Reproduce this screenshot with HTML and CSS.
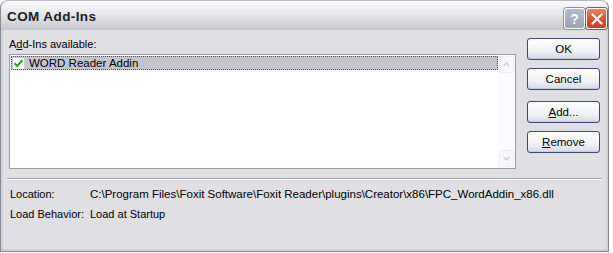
FILE: index.html
```html
<!DOCTYPE html>
<html>

<head>
    <title>COM Add-Ins</title>
    <link rel="stylesheet" href="styles.css">
</head>

<body>
    <div class="window">
        <div class="titlebar">
            <span class="title">COM Add-Ins</span>
            <div class="caption-buttons">
                <span class="cap-btn help">?</span>
                <span class="cap-btn close">
                    <svg width="12" height="12" viewBox="0 0 12 12">
                        <path d="M1.5 1.5 L10.5 10.5 M10.5 1.5 L1.5 10.5" stroke="#fff" stroke-width="2.2" stroke-linecap="round" />
                    </svg>
                </span>
            </div>
        </div>

        <div class="content">
            <div class="main-row">
                <div class="list-col">
                    <div class="list-label">A<u>d</u>d-Ins available:</div>
                    <div class="listbox">
                        <div class="items">
                            <div class="item selected">
                                <span class="check">
                                    <svg width="11" height="11" viewBox="0 0 11 11">
                                        <path d="M1.5 5.2 L4.2 8 L9.5 2.3" fill="none" stroke="#21a121" stroke-width="2" />
                                    </svg>
                                </span>
                                <span>WORD Reader Addin</span>
                            </div>
                        </div>
                        <div class="scrollbar">
                            <span class="arrow">
                                <svg width="7" height="5" viewBox="0 0 7 5"><path d="M0.5 4 L3.5 1 L6.5 4" fill="none" stroke="#c6cddd" stroke-width="1.4" /></svg>
                            </span>
                            <span class="arrow">
                                <svg width="7" height="5" viewBox="0 0 7 5"><path d="M0.5 1 L3.5 4 L6.5 1" fill="none" stroke="#c6cddd" stroke-width="1.4" /></svg>
                            </span>
                        </div>
                    </div>
                </div>

                <div class="button-col">
                    <button class="btn">OK</button>
                    <button class="btn">Cancel</button>
                    <button class="btn gap"><u>A</u>dd...</button>
                    <button class="btn"><u>R</u>emove</button>
                </div>
            </div>

            <div class="separator"></div>

            <div class="info">
                <div class="info-row">
                    <span class="info-key">Location:</span>
                    <span class="path">C:\Program Files\Foxit Software\Foxit Reader\plugins\Creator\x86\FPC_WordAddin_x86.dll</span>
                </div>
                <div class="info-row">
                    <span class="info-key">Load Behavior:</span>
                    <span>Load at Startup</span>
                </div>
            </div>
        </div>
    </div>
</body>

</html>
```

FILE: styles.css
```css
body {
    margin: 0;
    background: #ffffff;
    font-family: 'Liberation Sans', Arial, sans-serif;
    font-size: 11px;
    color: #000000;
}

.window {
    width: 609px;
    height: 252px;
    box-sizing: border-box;
    border: 1px solid #8a8a94;
    border-top-color: #b8b8c0;
    border-radius: 8px 8px 0 0;
    background: #e0dfe3;
    display: flex;
    flex-direction: column;
    overflow: hidden;
}

.titlebar {
    height: 29px;
    flex-shrink: 0;
    display: flex;
    align-items: center;
    justify-content: space-between;
    padding: 0 1px 0 6px;
    background: linear-gradient(#fbfbfc, #e6e6ea 45%, #cfcfd6 85%, #c4c4cc);
    border-radius: 7px 7px 0 0;
}

.title {
    font-weight: bold;
    font-size: 13.5px;
    color: #202024;
    letter-spacing: 0.4px;
    padding-top: 1px;
}

.caption-buttons {
    display: flex;
    gap: 1px;
    padding-top: 6px;
}

.cap-btn {
    width: 19px;
    height: 19px;
    border: 1px solid #ffffff;
    border-radius: 3px;
    display: flex;
    align-items: center;
    justify-content: center;
    box-shadow: 0 0 0 1px #8a8fa8;
}

.help {
    background: linear-gradient(#b8bccc, #9ca1b8);
    color: #ffffff;
    font-weight: bold;
    font-size: 14px;
}

.close {
    background: linear-gradient(#e8846c, #d44e32 60%, #c84228);
    box-shadow: 0 0 0 1px #b04a3a;
}

.content {
    flex: 1;
    padding: 7px 6px 0 6px;
    border-left: 2px solid #d0d0d8;
    border-right: 2px solid #d0d0d8;
    border-bottom: 2px solid #d0d0d8;
}

.main-row {
    display: flex;
}

.list-col {
    width: 508px;
}

.list-label {
    height: 15px;
    line-height: 15px;
    margin-bottom: 2px;
}

.listbox {
    height: 113px;
    border: 1px solid #9a9aa4;
    background: #ffffff;
    display: flex;
}

.items {
    flex: 1;
    padding: 1px 0 0 1px;
}

.item {
    height: 14px;
    display: flex;
    align-items: center;
    gap: 4px;
    padding-left: 1px;
    font-size: 11.5px;
}

.item.selected {
    background: #c4c4cb;
    outline: 1px dotted #505058;
    outline-offset: -1px;
}

.check {
    width: 11px;
    height: 11px;
    border: 1px solid #c8ccd6;
    background: #ffffff;
    display: flex;
    align-items: center;
    justify-content: center;
}

.scrollbar {
    width: 17px;
    background: #fbfbfd;
    display: flex;
    flex-direction: column;
    justify-content: space-between;
}

.arrow {
    height: 15px;
    margin: 1px;
    border: 1px solid #eceef4;
    border-radius: 2px;
    background: #f6f7fa;
    display: flex;
    align-items: center;
    justify-content: center;
}

.button-col {
    margin-left: 11px;
    padding-top: 1px;
    display: flex;
    flex-direction: column;
    gap: 8px;
}

.btn {
    width: 73px;
    height: 22px;
    font-family: inherit;
    font-size: 11.5px;
    color: #000000;
    border: 1px solid #3c4a74;
    border-radius: 3px;
    background: linear-gradient(#ffffff, #f2f2f6 60%, #d6d8e4);
    box-shadow: inset 0 -1px 0 #c8cce0;
    padding: 0;
}

.btn.gap {
    margin-top: 3px;
}

.separator {
    margin: 9px -2px 0 -2px;
    border-top: 1px solid #a8a8b0;
    border-bottom: 1px solid #ffffff;
}

.info {
    padding-top: 4px;
}

.info-row {
    display: flex;
    height: 20px;
    line-height: 20px;
    padding-left: 1px;
}

.info-key {
    width: 80px;
    flex-shrink: 0;
}

.path {
    font-size: 11.5px;
}
```
